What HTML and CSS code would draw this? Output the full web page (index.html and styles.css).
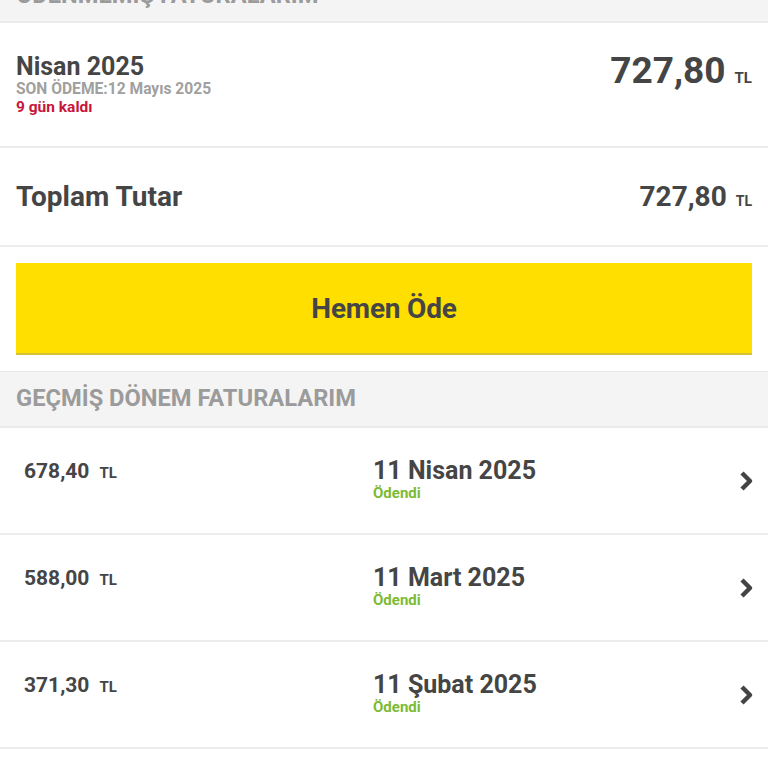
FILE: index.html
```html
<!DOCTYPE html>
<html lang="tr">
<head>
<meta charset="utf-8">
<link rel="stylesheet" href="styles.css">
</head>
<body>
<div class="page">
  <div class="section-head section-head--top">ÖDENMEMİŞ FATURALARIM</div>

  <div class="bill">
    <div class="bill-info">
      <div class="bill-period">Nisan 2025</div>
      <div class="bill-due">SON ÖDEME:12 Mayıs 2025</div>
      <div class="bill-left">9 gün kaldı</div>
    </div>
    <div class="amount amount--big"><span class="num">727,80</span><span class="cur">TL</span></div>
  </div>

  <div class="total">
    <div class="total-label">Toplam Tutar</div>
    <div class="amount amount--mid"><span class="num">727,80</span><span class="cur">TL</span></div>
  </div>

  <button class="pay">Hemen Öde</button>

  <div class="section-head">GEÇMİŞ DÖNEM FATURALARIM</div>

  <div class="hist-row">
    <div class="hist-amount"><span class="num">678,40</span><span class="cur">TL</span></div>
    <div class="hist-date">
      <div class="hist-day">11 Nisan 2025</div>
      <div class="hist-status">Ödendi</div>
    </div>
    <svg class="chev" width="16" height="22" viewBox="0 0 16 22"><polyline points="4,3 12,11 4,19" fill="none" stroke="#444" stroke-width="4.5" stroke-linejoin="round"/></svg>
  </div>

  <div class="hist-row">
    <div class="hist-amount"><span class="num">588,00</span><span class="cur">TL</span></div>
    <div class="hist-date">
      <div class="hist-day">11 Mart 2025</div>
      <div class="hist-status">Ödendi</div>
    </div>
    <svg class="chev" width="16" height="22" viewBox="0 0 16 22"><polyline points="4,3 12,11 4,19" fill="none" stroke="#444" stroke-width="4.5" stroke-linejoin="round"/></svg>
  </div>

  <div class="hist-row">
    <div class="hist-amount"><span class="num">371,30</span><span class="cur">TL</span></div>
    <div class="hist-date">
      <div class="hist-day">11 Şubat 2025</div>
      <div class="hist-status">Ödendi</div>
    </div>
    <svg class="chev" width="16" height="22" viewBox="0 0 16 22"><polyline points="4,3 12,11 4,19" fill="none" stroke="#444" stroke-width="4.5" stroke-linejoin="round"/></svg>
  </div>
</div>
</body>
</html>
```

FILE: styles.css
```css
* { box-sizing: border-box; }

html, body {
  margin: 0;
  padding: 0;
  background: #ffffff;
  overflow: hidden;
}

body {
  font-family: Roboto, "Liberation Sans", sans-serif;
  color: #454545;
  width: 768px;
  height: 768px;
}

.page {
  display: flex;
  flex-direction: column;
}

.section-head {
  height: 57px;
  display: flex;
  align-items: center;
  padding: 0 16px;
  background: #f4f4f4;
  border-top: 1px solid #e9e9e9;
  border-bottom: 2px solid #ebebeb;
  font-size: 23.7px;
  font-weight: 700;
  color: #9b9b9b;
  line-height: 1;
}

.section-head--top {
  margin-top: -34px;
  padding-top: 3px;
}

.bill {
  display: flex;
  justify-content: space-between;
  align-items: flex-start;
  padding: 28px 16px 0;
  border-bottom: 2px solid #ececec;
  height: 125px;
}

.bill-info {
  padding-top: 2px;
}

.bill-period {
  font-size: 25px;
  font-weight: 700;
  line-height: 27px;
}

.bill-due {
  font-size: 15.6px;
  font-weight: 700;
  line-height: 19px;
  color: #a0a0a0;
}

.bill-left {
  font-size: 15.5px;
  font-weight: 700;
  line-height: 17px;
  color: #c8153a;
}

.amount {
  display: flex;
  align-items: baseline;
  font-weight: 700;
}

.amount .cur {
  margin-left: 9px;
}

.amount--big .num {
  font-size: 37px;
  line-height: 40px;
}

.amount--big .cur {
  font-size: 15px;
}

.total {
  display: flex;
  justify-content: space-between;
  align-items: center;
  height: 99px;
  padding: 0 16px;
  border-bottom: 2px solid #ececec;
}

.total-label {
  font-size: 28px;
  font-weight: 700;
}

.amount--mid .num {
  font-size: 28px;
}

.amount--mid .cur {
  font-size: 14px;
}

.pay {
  margin: 16px 16px;
  height: 92px;
  background: #ffdf00;
  border: none;
  border-bottom: 2px solid #d8c236;
  border-radius: 0;
  font-family: Roboto, "Liberation Sans", sans-serif;
  font-size: 28px;
  font-weight: 700;
  letter-spacing: -0.2px;
  color: #454545;
  padding: 0;
}

.hist-row {
  display: flex;
  align-items: flex-start;
  height: 107px;
  padding: 29px 16px 0 24px;
  border-bottom: 2px solid #ececec;
}

.hist-amount {
  flex: 0 0 349px;
  display: flex;
  align-items: baseline;
  padding-top: 2px;
  font-weight: 700;
}

.hist-amount .num {
  font-size: 21px;
  line-height: 24px;
}

.hist-amount .cur {
  font-size: 15px;
  margin-left: 10px;
}

.hist-date {
  flex: 1 1 auto;
}

.hist-day {
  font-size: 25px;
  font-weight: 700;
  line-height: 27px;
}

.hist-status {
  font-size: 15px;
  font-weight: 700;
  line-height: 18px;
  color: #7cbb33;
}

.chev {
  align-self: center;
  margin-top: -29px;
  flex: 0 0 auto;
  margin-right: -2px;
}
```
